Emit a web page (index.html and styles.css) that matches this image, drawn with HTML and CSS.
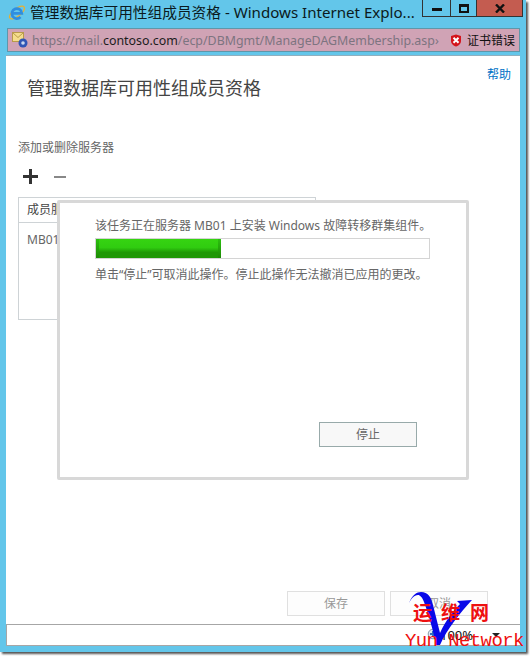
FILE: index.html
```html
<!DOCTYPE html>
<html lang="zh-CN">
<head>
  <meta charset="UTF-8">
  <title>管理数据库可用性组成员资格</title>
  <link rel="stylesheet" href="styles.css">
</head>
<body>
  <div class="window">
    <div class="titlebar">
      <svg class="ie-icon" width="18" height="18" viewBox="0 0 18 18">
        <ellipse cx="9" cy="9.500" rx="9" ry="3.800" transform="rotate(-38 9 9.500)" fill="none" stroke="#e8b030" stroke-width="1.300"/>
        <path d="M4.500 10.300H13.800A5 5 0 1 0 12.500 14" fill="none" stroke="#2e8ee0" stroke-width="2.700"/>
      </svg>
      <span class="title-text">管理数据库可用性组成员资格<span class="title-latin"> - Windows Internet Explo...</span></span>
      <div class="controls">
        <div class="ctl ctl-min"><span class="min-bar"></span></div>
        <div class="ctl ctl-max"><span class="max-box"></span></div>
        <div class="ctl ctl-close">
          <svg width="10" height="9" viewBox="0 0 10 9"><path d="M1 .5 9 8.500M9 .5 1 8.500" stroke="#111" stroke-width="2.400"/></svg>
        </div>
      </div>
    </div>

    <div class="addressbar">
      <svg class="mail-icon" width="16" height="16" viewBox="0 0 16 16">
        <rect x=".5" y=".5" width="11" height="9" fill="#f5dc8c" stroke="#b99a4a"/>
        <path d="M.5 .5 6 5.500 11.500 .5" fill="none" stroke="#b99a4a"/>
        <circle cx="11" cy="11" r="4.500" fill="#2f55b5"/>
        <circle cx="11" cy="11" r="1.800" fill="#c8d8f0"/>
      </svg>
      <span class="url"><span class="url-dim">https://mail.</span><span class="url-host">contoso.com</span><span class="url-dim">/ecp/DBMgmt/ManageDAGMembership.asp›</span></span>
      <svg class="shield-icon" width="12" height="13" viewBox="0 0 12 13">
        <path d="M6 .5 11 2V7C11 10 8.500 11.800 6 12.500 3.500 11.800 1 10 1 7V2Z" fill="#d4141c"/>
        <path d="M3.500 3.800 8.500 8.800M8.500 3.800 3.500 8.800" stroke="#fff" stroke-width="2"/>
      </svg>
      <span class="cert">证书错误</span>
    </div>

    <div class="content">
      <div class="help-row"><a class="help">帮助</a></div>
      <h1 class="heading">管理数据库可用性组成员资格</h1>
      <div class="section-label">添加或删除服务器</div>
      <div class="toolbar">
        <span class="plus"></span>
        <span class="minus"></span>
      </div>
      <div class="member-table">
        <div class="member-head">成员服务器</div>
        <div class="member-row">MB01</div>
      </div>
      <div class="actions">
        <div class="btn-off">保存</div>
        <div class="btn-off">取消</div>
      </div>

      <div class="dialog">
        <div class="dialog-msg">该任务正在服务器 MB01 上安装 Windows 故障转移群集组件。</div>
        <div class="progress"><div class="progress-fill"></div></div>
        <div class="dialog-note">单击“停止”可取消此操作。停止此操作无法撤消已应用的更改。</div>
        <div class="dialog-foot"><div class="btn-stop">停止</div></div>
      </div>
    </div>

    <div class="statusbar">
      <svg class="zoom-icon" width="14" height="15" viewBox="0 0 14 15">
        <path d="M9 9.500 13 14" stroke="#a07048" stroke-width="2"/>
        <circle cx="6" cy="6" r="4.800" fill="#dfe8f2" stroke="#8a9aaa"/>
        <path d="M3 6H9M6 3V9" stroke="#2f70c0" stroke-width="2"/>
      </svg>
      <span class="zoom-text">100%</span>
      <span class="zoom-arrow"></span>
    </div>
  </div>

  <div class="watermark">
    <svg class="wm-mark" width="80" height="62" viewBox="0 0 80 62">
      <path d="M9 18C12 10 17 7 21 7 28 7 31 12 33 20L40 48C46 35 53 26 60 19L57 16 72 15C60 28 47 44 40 60H36C33 44 28 28 24 17 22 12 20 10 18 10 14 10 11 14 9 18Z" fill="#0808e8"/>
    </svg>
    <span class="wm-cn wm-cn1">运</span>
    <span class="wm-cn wm-cn2">维</span>
    <span class="wm-cn wm-cn3">网</span>
    <span class="wm-en">Yun Network</span>
  </div>
</body>
</html>
```

FILE: styles.css
```css
*{
  margin: 0;
  padding: 0;
  box-sizing: border-box;
}
html,body{
  height: 100%;
  background: #fff;
  overflow: hidden;
}
body{
  font-family: "Noto Sans", "Noto Sans CJK SC", sans-serif;
  position: relative;
}
.window{
  width: 526px;
  height: 652px;
  background: #63c6ea;
  box-shadow: 2px 2px 2px #555;
  padding: 0 6px;
  display: flex;
  flex-direction: column;
}
.titlebar{
  height: 28px;
  display: flex;
  align-items: flex-start;
  margin: 0 -6px;
  padding-left: 8px;
}
.ie-icon{
  margin-top: 3px;
  flex: none;
}
.title-text{
  margin-left: 4px;
  margin-top: 1px;
  font-size: 14.7px;
  line-height: 22px;
  color: #0b1a20;
  white-space: nowrap;
  flex: none;
  width: 392px;
  overflow: hidden;
}
.title-latin{
  font-size: 15.1px;
}
.controls{
  margin-left: auto;
  margin-right: 4px;
  height: 17px;
  display: flex;
  border: 1px solid #333;
  border-top: 0;
}
.ctl{
  height: 16px;
  display: flex;
  align-items: center;
  justify-content: center;
}
.ctl-min{
  width: 28px;
  border-right: 1px solid #333;
}
.ctl-max{
  width: 26px;
  border-right: 1px solid #333;
}
.ctl-close{
  width: 45px;
  background: #c45c50;
}
.min-bar{
  display: block;
  width: 10px;
  height: 3px;
  margin-top: 3px;
  background: #111;
}
.max-box{
  display: block;
  width: 10px;
  height: 9px;
  border: 2px solid #111;
  border-top-width: 3px;
}
.addressbar{
  height: 24px;
  margin: 0 0 3px 1px;
  width: 513px;
  background: #d0a3b5;
  border: 1px solid #5f97aa;
  display: flex;
  align-items: center;
  padding-left: 4px;
}
.mail-icon{
  flex: none;
}
.url{
  margin-left: 4px;
  width: 408px;
  flex: none;
  font-size: 12.4px;
  white-space: nowrap;
  overflow: hidden;
}
.url-dim{
  color: #7d7480;
}
.url-host{
  color: #1c1c1c;
}
.shield-icon{
  margin-left: 10px;
  flex: none;
}
.cert{
  margin-left: 5px;
  font-size: 12px;
  color: #111;
  white-space: nowrap;
}
.content{
  height: 569px;
  background: #fff;
  border-top: 1px solid #8fb0bf;
  position: relative;
  display: flex;
  flex-direction: column;
  padding: 12px 0 8px 12px;
}
.help-row{
  display: flex;
  justify-content: flex-end;
  padding-right: 9px;
  height: 7px;
}
.help{
  font-size: 12px;
  line-height: 14px;
  color: #0072c6;
}
.heading{
  margin-left: 9px;
  font-size: 18px;
  font-weight: 400;
  line-height: 26px;
  color: #444;
}
.section-label{
  margin-top: 39px;
  font-size: 12px;
  line-height: 16px;
  color: #666;
}
.toolbar{
  margin: 12px 0 0 5px;
  height: 16px;
  display: flex;
  align-items: center;
  gap: 16px;
}
.plus{
  width: 15px;
  height: 15px;
  background:
    linear-gradient(#333,#333) center / 15px 3px no-repeat,
    linear-gradient(#333,#333) center / 3px 15px no-repeat;
}
.minus{
  width: 12px;
  height: 2px;
  margin-top: 1px;
  background: #888;
}
.member-table{
  margin-top: 13px;
  width: 298px;
  height: 123px;
  border: 1px solid #ced3d6;
}
.member-head{
  height: 25px;
  padding-left: 8px;
  font-size: 12px;
  line-height: 24px;
  color: #444;
  border-bottom: 1px solid #ced3d6;
}
.member-row{
  padding: 9px 0 0 8px;
  font-size: 12px;
  line-height: 16px;
  color: #666;
}
.actions{
  margin-top: auto;
  align-self: flex-end;
  margin-right: 32px;
  display: flex;
  gap: 5px;
}
.btn-off{
  width: 98px;
  height: 25px;
  border: 1px solid #e0e0e0;
  background: #fdfdfd;
  font-size: 12px;
  line-height: 23px;
  text-align: center;
  color: #999;
}
.dialog{
  position: absolute;
  left: 51px;
  top: 144px;
  width: 412px;
  height: 280px;
  background: #fff;
  border: 3px solid #d8d8d8;
  border-radius: 2px;
  padding: 15px 35px 0;
  display: flex;
  flex-direction: column;
}
.dialog-msg{
  font-size: 12px;
  line-height: 16px;
  color: #666;
  white-space: nowrap;
}
.progress{
  margin-top: 4px;
  width: 335px;
  height: 21px;
  border: 1px solid #d4d4d4;
}
.progress-fill{
  width: 125px;
  height: 19px;
  background:
    linear-gradient(#2cc010,#1d8a05) left / 3px 100% no-repeat,
    linear-gradient(#2cc010,#1d8a05) right / 3px 100% no-repeat,
    linear-gradient(#36d412 0%,#30cc10 45%,#1f9806 70%,#1f9806 100%);
}
.dialog-note{
  margin-top: 8px;
  font-size: 12px;
  line-height: 16px;
  color: #666;
  white-space: nowrap;
}
.dialog-foot{
  margin-top: auto;
  margin-bottom: 30px;
  display: flex;
  justify-content: flex-end;
  padding-right: 14px;
}
.btn-stop{
  width: 98px;
  height: 25px;
  border: 1px solid #98aaaa;
  background: #f8f8f8;
  font-size: 12px;
  line-height: 23px;
  text-align: center;
  color: #666;
}
.statusbar{
  width: 514px;
  height: 22px;
  background: #fff;
  border-top: 1px solid #a6a6a6;
  border-left: 1px solid #a6a6a6;
  border-bottom: 1px solid #a6a6a6;
  display: flex;
  align-items: center;
  padding-left: 420px;
}
.zoom-icon{
  flex: none;
}
.zoom-text{
  margin-left: -1px;
  font-size: 13px;
  color: #111;
}
.zoom-arrow{
  margin-left: 19px;
  border-top: 4px solid #222;
  border-left: 4px solid transparent;
  border-right: 4px solid transparent;
}
.watermark{
  position: absolute;
  left: 400px;
  top: 585px;
  width: 130px;
  height: 71px;
}
.wm-mark{
  position: absolute;
  left: 0;
  top: 0;
}
.wm-cn{
  position: absolute;
  top: 16px;
  font-family: "Noto Sans CJK SC", serif;
  font-size: 19px;
  line-height: 22px;
  font-weight: 700;
  color: #ee1010;
}
.wm-cn1{ left: 13px; }
.wm-cn2{ left: 41px; }
.wm-cn3{ left: 70px; }
.wm-en{
  position: absolute;
  left: 5px;
  top: 45px;
  font-family: "Liberation Mono", monospace;
  font-size: 19px;
  line-height: 22px;
  letter-spacing: -.6px;
  color: #ee1010;
  white-space: nowrap;
}
```
